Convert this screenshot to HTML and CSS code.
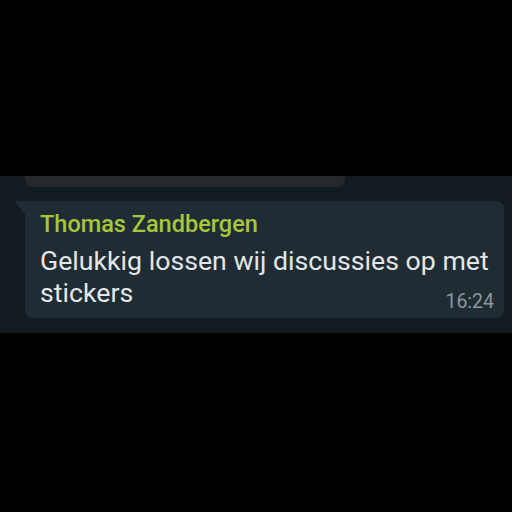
FILE: index.html
```html
<!DOCTYPE html>
<html>
<head>
<meta charset="utf-8">
<link rel="stylesheet" href="styles.css">
</head>
<body>
<div class="screen">
  <div class="chat">
    <div class="prev-row"><div class="prev-bubble"></div></div>
    <div class="row">
      <div class="bubble">
        <svg class="tail" width="12" height="14" viewBox="0 0 12 14"><path d="M0 0 H12 V14 Z" fill="#202c33"/></svg>
        <div class="name">Thomas Zandbergen</div>
        <p class="text">Gelukkig lossen wij discussies op met stickers<span class="time">16:24</span></p>
      </div>
    </div>
  </div>
</div>
</body>
</html>
```
FILE: styles.css
```css
html, body {
  margin: 0;
  padding: 0;
  background: #000;
}
.screen {
  width: 512px;
  height: 512px;
  display: flex;
  flex-direction: column;
  padding-top: 176px;
  box-sizing: border-box;
}
.chat {
  background: #121b21;
  height: 157px;
  display: flex;
  flex-direction: column;
}
.prev-row {
  height: 11px;
  padding-left: 25px;
}
.prev-bubble {
  width: 320px;
  height: 11px;
  background: #25282c;
  border-radius: 0 0 8px 8px;
}
.row {
  padding: 14px 8px 0 25px;
}
.bubble {
  position: relative;
  background: #202c33;
  border-radius: 0 8px 8px 8px;
  height: 117px;
  box-sizing: border-box;
  padding: 9px 8px 0 15px;
  font-family: Roboto, "Noto Sans", sans-serif;
}
.tail {
  position: absolute;
  left: -11px;
  top: 0;
}
.name {
  color: #a6c63e;
  font-size: 23.5px;
  line-height: 28px;
  font-weight: 500;
}
.text {
  margin: 7px 0 0;
  color: #e2e6e8;
  font-size: 26.7px;
  line-height: 32px;
}
.time {
  float: right;
  margin: 14px 2px 0 0;
  color: #8c979c;
  font-size: 19.5px;
  line-height: 22px;
}
```
